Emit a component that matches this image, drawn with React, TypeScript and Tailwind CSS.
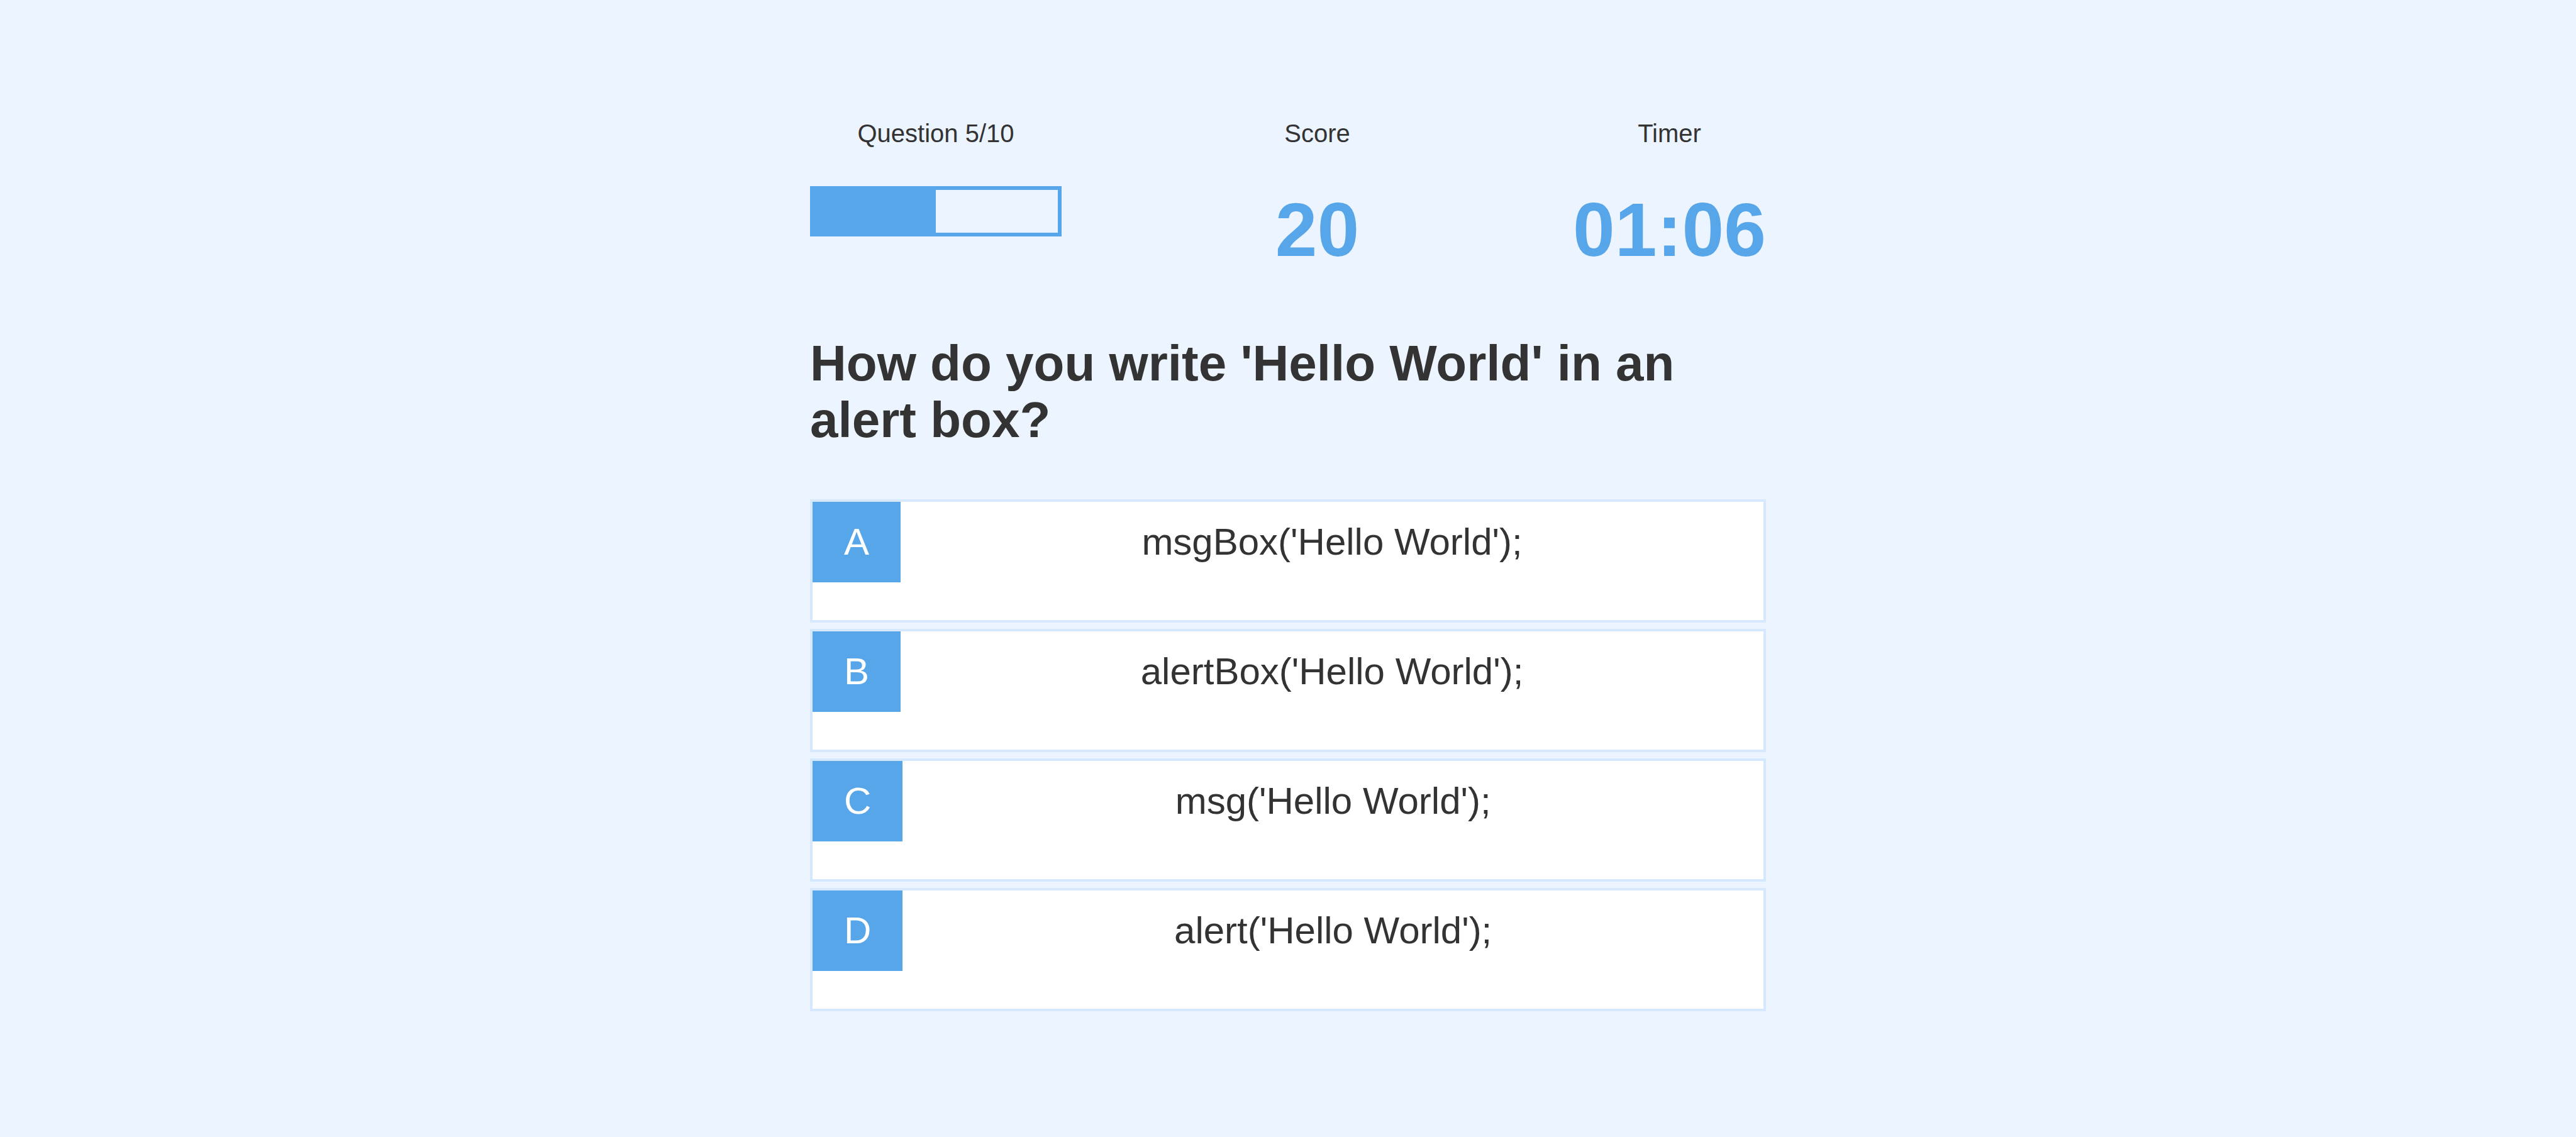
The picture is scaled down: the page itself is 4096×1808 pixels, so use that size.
const options = [
  { letter: "A", text: "msgBox('Hello World');" },
  { letter: "B", text: "alertBox('Hello World');" },
  { letter: "C", text: "msg('Hello World');" },
  { letter: "D", text: "alert('Hello World');" },
];

function Stat({ label, children }: { label: string; children: React.ReactNode }) {
  return (
    <div className="flex flex-col items-center">
      <div className="text-[40px] leading-[46px] text-[#333333]">{label}</div>
      <div className="mt-[61px]">{children}</div>
    </div>
  );
}

export default function App() {
  return (
    <div
      className="min-h-screen bg-[#ebf4ff]"
      style={{ fontFamily: '"Liberation Sans", Arial, sans-serif' }}
    >
      <div className="mx-auto w-[1520px] pt-[189px]">
        <div className="flex justify-between">
          <Stat label="Question 5/10">
            <div className="h-[80px] w-[400px] border-[6px] border-[#58a6ea]">
              <div className="h-full w-1/2 bg-[#58a6ea]" />
            </div>
          </Stat>
          <Stat label="Score">
            <div className="text-[120px] font-bold leading-[138px] text-[#58a6ea]">20</div>
          </Stat>
          <Stat label="Timer">
            <div className="text-[120px] font-bold leading-[138px] text-[#58a6ea]">01:06</div>
          </Stat>
        </div>

        <h1 className="mt-[99px] text-[80px] font-bold leading-[90px] text-[#333333]">
          How do you write 'Hello World' in an alert box?
        </h1>

        <div className="mt-[81px] flex flex-col gap-[10px]">
          {options.map((o) => (
            <div
              key={o.letter}
              className="flex h-[196px] items-start border-4 border-[#d6e8fb] bg-white"
            >
              <span className="flex h-[128px] items-center bg-[#58a6ea] px-[50px] text-[60px] text-white">
                {o.letter}
              </span>
              <span className="flex h-[128px] flex-1 items-center justify-center text-[60px] text-[#333333]">
                {o.text}
              </span>
            </div>
          ))}
        </div>
      </div>
    </div>
  );
}
